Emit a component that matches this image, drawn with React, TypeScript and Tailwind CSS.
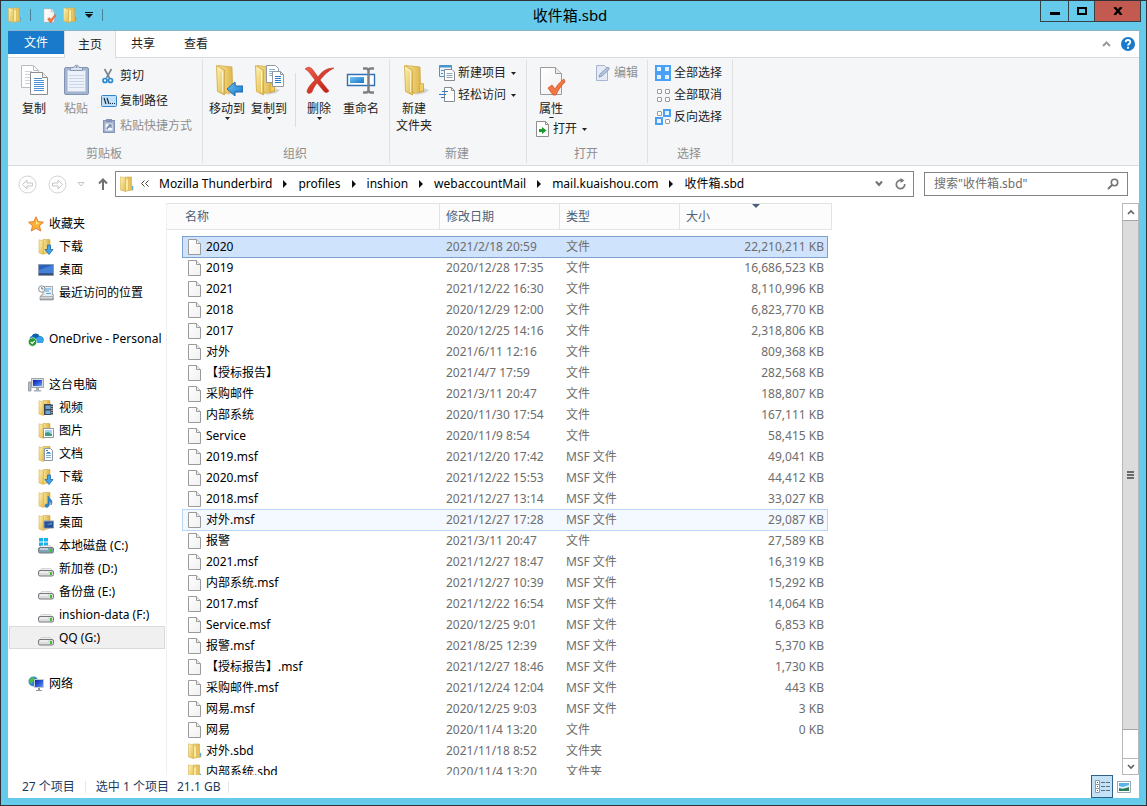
import React, { useState } from "react";

type FileRow = { name: string; date: string; type: string; size: string };

const FILES: FileRow[] = [
  { name: "2020", date: "2021/2/18 20:59", type: "文件", size: "22,210,211 KB" },
  { name: "2019", date: "2020/12/28 17:35", type: "文件", size: "16,686,523 KB" },
  { name: "2021", date: "2021/12/22 16:30", type: "文件", size: "8,110,996 KB" },
  { name: "2018", date: "2020/12/29 12:00", type: "文件", size: "6,823,770 KB" },
  { name: "2017", date: "2020/12/25 14:16", type: "文件", size: "2,318,806 KB" },
  { name: "对外", date: "2021/6/11 12:16", type: "文件", size: "809,368 KB" },
  { name: "【授标报告】", date: "2021/4/7 17:59", type: "文件", size: "282,568 KB" },
  { name: "采购邮件", date: "2021/3/11 20:47", type: "文件", size: "188,807 KB" },
  { name: "内部系统", date: "2020/11/30 17:54", type: "文件", size: "167,111 KB" },
  { name: "Service", date: "2020/11/9 8:54", type: "文件", size: "58,415 KB" },
  { name: "2019.msf", date: "2021/12/20 17:42", type: "MSF 文件", size: "49,041 KB" },
  { name: "2020.msf", date: "2021/12/22 15:53", type: "MSF 文件", size: "44,412 KB" },
  { name: "2018.msf", date: "2021/12/27 13:14", type: "MSF 文件", size: "33,027 KB" },
  { name: "对外.msf", date: "2021/12/27 17:28", type: "MSF 文件", size: "29,087 KB" },
  { name: "报警", date: "2021/3/11 20:47", type: "文件", size: "27,589 KB" },
  { name: "2021.msf", date: "2021/12/27 18:47", type: "MSF 文件", size: "16,319 KB" },
  { name: "内部系统.msf", date: "2021/12/27 10:39", type: "MSF 文件", size: "15,292 KB" },
  { name: "2017.msf", date: "2021/12/22 16:54", type: "MSF 文件", size: "14,064 KB" },
  { name: "Service.msf", date: "2020/12/25 9:01", type: "MSF 文件", size: "6,853 KB" },
  { name: "报警.msf", date: "2021/8/25 12:39", type: "MSF 文件", size: "5,370 KB" },
  { name: "【授标报告】.msf", date: "2021/12/27 18:46", type: "MSF 文件", size: "1,730 KB" },
  { name: "采购邮件.msf", date: "2021/12/24 12:04", type: "MSF 文件", size: "443 KB" },
  { name: "网易.msf", date: "2020/12/25 9:03", type: "MSF 文件", size: "3 KB" },
  { name: "网易", date: "2020/11/4 13:20", type: "文件", size: "0 KB" },
  { name: "对外.sbd", date: "2021/11/18 8:52", type: "文件夹", size: "" },
  { name: "内部系统.sbd", date: "2020/11/4 13:20", type: "文件夹", size: "" },
];

const CRUMBS = ["Mozilla Thunderbird", "profiles", "inshion", "webaccountMail", "mail.kuaishou.com", "收件箱.sbd"];

type NavItem = { label: string; icon: React.ReactNode };

const FAVORITES: NavItem[] = [
  { label: "下载", icon: <NavFolder><DownArrow /></NavFolder> },
  { label: "桌面", icon: <DesktopIcon /> },
  { label: "最近访问的位置", icon: <RecentIcon /> },
];

const COMPUTER: NavItem[] = [
  {
    label: "视频",
    icon: (
      <NavFolder>
        <path d="M6 4h9v11H6z" fill="#3c4650" />
        <path d="M7.500 5.500h5v3.500h-5zM7.500 10.500h5v3.500h-5z" fill="#6aa7d6" />
        <path d="M14 4v11" stroke="#fff" strokeDasharray="1 1" />
      </NavFolder>
    ),
  },
  {
    label: "图片",
    icon: (
      <NavFolder>
        <path d="M5.500 5.500h10v9h-10z" fill="#fff" stroke="#8c98a3" />
        <path d="M7 7h7v3H7z" fill="#9fd3f2" />
        <path d="M7 10l3-1 4 2v2H7z" fill="#3f9a86" />
      </NavFolder>
    ),
  },
  {
    label: "文档",
    icon: (
      <NavFolder>
        <path d="M6.500 2.500h6l2 2v10h-8z" fill="#fff" stroke="#8c98a3" />
        <path d="M8 7.500h5M8 9.500h5M8 11.500h5" stroke="#7fb0dc" />
        <path d="M8 4.500h2M9 6.500h3" stroke="#2f7cc8" />
      </NavFolder>
    ),
  },
  { label: "下载", icon: <NavFolder><DownArrow /></NavFolder> },
  {
    label: "音乐",
    icon: (
      <NavFolder>
        <path d="M10 4c1 3 4 3 4 6 0 1-.5 2-1 3 .3-3-1-3.500-2-4v4c0 3-4 3-4 1s1.500-2 3-2z" fill="#2b8ad8" stroke="#1a5f9e" strokeWidth=".5" />
      </NavFolder>
    ),
  },
  {
    label: "桌面",
    icon: (
      <NavFolder>
        <path d="M6 6h9.500v7H6z" fill="#1f4fa0" stroke="#8b9bb0" />
        <path d="M6.500 12.500h9M7 10l7-3v3z" fill="#4f93dc" stroke="#38506e" strokeWidth=".5" />
      </NavFolder>
    ),
  },
  { label: "本地磁盘 (C:)", icon: <DriveIcon system /> },
  { label: "新加卷 (D:)", icon: <DriveIcon /> },
  { label: "备份盘 (E:)", icon: <DriveIcon /> },
  { label: "inshion-data (F:)", icon: <DriveIcon /> },
  { label: "QQ (G:)", icon: <DriveIcon /> },
];

export default function App() {
  const [selected, setSelected] = useState(0);
  const hovered = 13;

  return (
    <div className="flex h-screen flex-col overflow-hidden border border-[#2f3338] bg-[#66cbea] px-[7px] pb-[7px] font-['Noto_Sans','Noto_Sans_CJK_SC',sans-serif] text-xs leading-4 text-[#222]">
      <Gradients />
      <TitleBar />
      <main className="flex min-h-0 flex-1 flex-col border-t border-[#8eb4c4] bg-white">
        <Tabs />
        <Ribbon />
        <AddressRow />
        <div className="mt-[6px] flex min-h-0 flex-1">
          <NavPane />
          <div className="min-w-0 flex-1 overflow-hidden">
            <FileTable selected={selected} hovered={hovered} onSelect={setSelected} />
          </div>
          <ScrollBar />
        </div>
        <StatusBar />
      </main>
    </div>
  );
}

function TitleBar() {
  return (
    <header className="-mr-[2px] flex h-[29px] shrink-0 items-start">
      <div className="flex w-[92px] items-center pt-[6px]">
        <SmallFolder />
        <span className="ml-2 h-3 w-px shrink-0 bg-[#4a8296]" />
        <button type="button" aria-label="属性" className="ml-[10px] shrink-0">
          <PropertiesIcon size={16} />
        </button>
        <button type="button" aria-label="新建文件夹" className="ml-[6px] shrink-0">
          <SmallFolder />
        </button>
        <button type="button" aria-label="自定义快速访问工具栏" className="ml-[8px] shrink-0">
          <svg width="8" height="8" viewBox="0 0 8 8">
            <path d="M0 1h8v1H0zM0 3h8L4 7z" fill="#111" />
          </svg>
        </button>
        <span className="ml-[9px] h-3 w-px shrink-0 bg-[#4a8296]" />
      </div>
      <h1 className="flex-1 pt-[4px] text-center text-[15px] leading-5 text-black">收件箱.sbd</h1>
      <div className="flex h-[21px] border-x border-b border-[#33434a]">
        <button type="button" aria-label="最小化" className="flex w-[27px] items-center justify-center pt-1">
          <span className="h-[3px] w-[10px] bg-black" />
        </button>
        <button type="button" aria-label="最大化" className="flex w-[27px] items-center justify-center border-x border-[#33434a]">
          <span className="h-2 w-[10px] border-2 border-black" />
        </button>
        <button type="button" aria-label="关闭" className="flex w-[45px] items-center justify-center bg-[#c35a50]">
          <svg width="10" height="8" viewBox="0 0 10 8">
            <path d="M1.500 0l7 8M8.500 0l-7 8" stroke="#000" strokeWidth="2.400" />
          </svg>
        </button>
      </div>
    </header>
  );
}

function Tabs() {
  return (
    <div className="flex h-[27px] shrink-0 items-stretch border-b border-[#dadbdc]">
      <button type="button" className="mb-[3px] w-14 bg-[#1979ca] text-white">
        文件
      </button>
      <button type="button" className="-mb-px w-[52px] border-x border-[#dadbdc] bg-[#f5f6f7]">
        主页
      </button>
      <button type="button" className="w-[54px]">共享</button>
      <button type="button" className="w-[52px]">查看</button>
      <div className="ml-auto flex items-center gap-[10px] pr-1">
        <button type="button" aria-label="最小化功能区">
          <svg width="9" height="6" viewBox="0 0 9 6">
            <path d="M1 5l3.500-3.500L8 5" fill="none" stroke="#9a9a9a" strokeWidth="2" />
          </svg>
        </button>
        <button type="button" aria-label="帮助">
          <svg width="14" height="14" viewBox="0 0 14 14">
            <circle cx="7" cy="7" r="7" fill="#1979ca" />
            <path d="M4.700 5.200C4.700 2.300 9.300 2.300 9.300 5 9.300 6.700 7 6.700 7 8.600M7 9.800v2" fill="none" stroke="#fff" strokeWidth="1.800" />
          </svg>
        </button>
      </div>
    </div>
  );
}

function Ribbon() {
  return (
    <div className="flex h-[108px] shrink-0 border-b border-[#dadbdc] bg-[#f5f6f7] py-[2px]">
      <RibbonGroup title="剪贴板" width="w-[195px]" inset="pl-[5px]">
        <BigButton icon={<CopyIcon />} label="复制" />
        <BigButton icon={<PasteIcon />} label="粘贴" disabled />
        <div className="ml-1 flex flex-col pt-[3px]">
          <SmallButton tall icon={<CutIcon />} label="剪切" />
          <SmallButton tall icon={<PathIcon />} label="复制路径" />
          <SmallButton tall icon={<ShortcutIcon />} label="粘贴快捷方式" disabled />
        </div>
      </RibbonGroup>
      <RibbonGroup title="组织" width="w-[187px]" inset="pl-[3px]">
        <BigButton icon={<MoveToIcon />} label="移动到" menu />
        <BigButton icon={<CopyToIcon />} label="复制到" menu />
        <span className="mt-[13px] mr-[2px] ml-[5px] h-[54px] w-px bg-[#dcdddf]" />
        <BigButton icon={<DeleteIcon />} label="删除" menu />
        <BigButton icon={<RenameIcon />} label="重命名" />
      </RibbonGroup>
      <RibbonGroup title="新建" width="w-[137px]" inset="pl-[3px]">
        <BigButton icon={<BigFolder />} label={"新建\n文件夹"} />
        <div className="ml-1 flex flex-col pt-[2px]">
          <SmallButton icon={<NewItemIcon />} label="新建项目" menu />
          <SmallButton icon={<EasyAccessIcon />} label="轻松访问" menu />
        </div>
      </RibbonGroup>
      <RibbonGroup title="打开" width="w-[121px]" inset="pl-[3px]">
        <div className="w-[65px]">
          <div className="h-[58px] overflow-hidden">
            <BigButton icon={<PropertiesIcon size={32} />} label="属性" menu />
          </div>
          <div className="pl-[6px]">
            <SmallButton icon={<OpenIcon />} label="打开" menu />
          </div>
        </div>
        <div className="pt-[2px]">
          <SmallButton icon={<EditIcon />} label="编辑" disabled />
        </div>
      </RibbonGroup>
      <RibbonGroup title="选择" width="w-[85px]" inset="pl-[7px]">
        <div className="flex flex-col pt-[2px]">
          <SmallButton icon={<SelectIcon on={[true, true, true, true]} />} label="全部选择" />
          <SmallButton icon={<SelectIcon on={[false, false, false, false]} />} label="全部取消" />
          <SmallButton icon={<SelectIcon on={[false, true, true, false]} />} label="反向选择" />
        </div>
      </RibbonGroup>
    </div>
  );
}

function RibbonGroup({ title, width, inset, children }: { title: string; width: string; inset: string; children: React.ReactNode }) {
  return (
    <section aria-label={title} className={`flex shrink-0 flex-col border-r border-[#e0e1e3] ${width}`}>
      <div className={`flex flex-1 items-start ${inset}`}>{children}</div>
      <div className="pr-[2px] pb-px text-center text-[#8e8e8e]">{title}</div>
    </section>
  );
}

function BigButton({ icon, label, menu, disabled }: { icon: React.ReactNode; label: string; menu?: boolean; disabled?: boolean }) {
  return (
    <button type="button" disabled={disabled} className={`flex w-[42px] flex-col items-center pt-1 ${disabled ? "text-[#8e8e8e]" : ""}`}>
      {icon}
      <span className="mt-1 leading-[17px] whitespace-pre">{label}</span>
      {menu ? <Caret /> : null}
    </button>
  );
}

function SmallButton({
  icon,
  label,
  menu,
  tall,
  disabled,
}: {
  icon: React.ReactNode;
  label: string;
  menu?: boolean;
  tall?: boolean;
  disabled?: boolean;
}) {
  return (
    <button
      type="button"
      disabled={disabled}
      className={`flex items-center gap-[3px] whitespace-nowrap ${tall ? "h-[25px]" : "h-[22px]"} ${disabled ? "text-[#8e8e8e]" : ""}`}
    >
      {icon}
      <span>{label}</span>
      {menu ? <span className="pl-[2px]"><Caret /></span> : null}
    </button>
  );
}

function Caret() {
  return (
    <svg width="5" height="3" viewBox="0 0 5 3" className="shrink-0">
      <path d="M0 0h5L2.500 3z" fill="#222" />
    </svg>
  );
}

function AddressRow() {
  return (
    <div className="flex shrink-0 items-center pt-[5px] pr-[11px] pl-[10px]">
      <button type="button" aria-label="后退" disabled className="mr-[11px]">
        <RoundArrow />
      </button>
      <button type="button" aria-label="前进" disabled className="rotate-180">
        <RoundArrow />
      </button>
      <button type="button" aria-label="最近浏览的位置" className="ml-[10px]">
        <svg width="8" height="5" viewBox="0 0 8 5">
          <path d="M1 .500h6L4 4z" fill="none" stroke="#c8c8c8" />
        </svg>
      </button>
      <button type="button" aria-label="上移" className="ml-[13px]">
        <svg width="10" height="12" viewBox="0 0 10 12">
          <path d="M5 12V2M1 5.500L5 1.500l4 4" fill="none" stroke="#707070" strokeWidth="2" />
        </svg>
      </button>
      <nav aria-label="地址" className="ml-[7px] flex h-[26px] min-w-0 flex-1 items-center border border-[#858585] pb-px pl-1 text-black">
        <SmallFolder />
        <svg width="8" height="7" viewBox="0 0 8 7" className="mr-[10px] ml-[7px] shrink-0" aria-hidden="true">
          <path d="M3.500 .500l-3 3 3 3M7.500 .500l-3 3 3 3" fill="none" stroke="#444" />
        </svg>
        {CRUMBS.map((crumb, i) => (
          <React.Fragment key={crumb}>
            {i > 0 ? (
              <svg width="4" height="8" viewBox="0 0 4 8" className="mx-[11px] shrink-0">
                <path d="M0 0v8l4-4z" fill="#111" />
              </svg>
            ) : null}
            <a href="#" className="whitespace-nowrap">{crumb}</a>
          </React.Fragment>
        ))}
        <button type="button" aria-label="以前的位置" className="ml-auto">
          <svg width="8" height="7" viewBox="0 0 8 7">
            <path d="M1 1.500L4 5l3-3.500" fill="none" stroke="#707070" strokeWidth="2" />
          </svg>
        </button>
        <button type="button" aria-label="刷新" className="mr-[7px] ml-3">
          <svg width="11" height="12" viewBox="0 0 11 12">
            <path d="M7 2.500A4.200 4.200 0 1 0 9.700 6" fill="none" stroke="#7a7a7a" strokeWidth="1.700" />
            <path d="M5.500 0v5l4-2.500z" fill="#7a7a7a" />
          </svg>
        </button>
      </nav>
      <label className="ml-[10px] flex h-6 w-[204px] items-center border border-[#858585] pr-2 pl-[9px]">
        <input aria-label="搜索" placeholder={'搜索"收件箱.sbd"'} className="min-w-0 flex-1 outline-none placeholder:text-[#6d6d6d]" />
        <svg width="12" height="12" viewBox="0 0 12 12">
          <circle cx="7.500" cy="4.500" r="3.200" fill="none" stroke="#757575" strokeWidth="1.600" />
          <path d="M5 7L1 11" stroke="#757575" strokeWidth="2" />
        </svg>
      </label>
    </div>
  );
}

function NavPane() {
  return (
    <nav aria-label="导航窗格" className="w-[159px] shrink-0 overflow-hidden border-r border-[#f0f0f0] pt-[9px] text-black">
      <NavSection item={{ label: "收藏夹", icon: <StarIcon /> }} items={FAVORITES} />
      <NavSection item={{ label: "OneDrive - Personal", icon: <OneDriveIcon /> }} />
      <NavSection item={{ label: "这台电脑", icon: <ComputerIcon /> }} items={COMPUTER} current="QQ (G:)" />
      <NavSection item={{ label: "网络", icon: <NetworkIcon /> }} />
    </nav>
  );
}

function NavSection({ item, items = [], current }: { item: NavItem; items?: NavItem[]; current?: string }) {
  return (
    <div className="mb-[23px]">
      <a href="#" className="flex h-[23px] items-center gap-[5px] pl-5 whitespace-nowrap">
        {item.icon}
        {item.label}
      </a>
      {items.map((it) => (
        <a
          key={it.label}
          href="#"
          className={`mr-px ml-px flex h-[23px] items-center gap-[5px] border pl-7 whitespace-nowrap ${
            it.label === current ? "border-[#dadada] bg-[#f0f0f0]" : "border-transparent"
          }`}
        >
          {it.icon}
          {it.label}
        </a>
      ))}
    </div>
  );
}

function FileTable({ selected, hovered, onSelect }: { selected: number; hovered: number; onSelect: (i: number) => void }) {
  const head = "flex items-center border-r border-[#e3e3e3] pl-[6px] text-left font-normal";
  return (
    <table className="block w-[665px]">
      <thead className="block">
        <tr className="grid h-[27px] grid-cols-[273px_120px_120px_152px] border-y border-[#e3e3e3] bg-[#fcfcfc] text-[#4c607a]">
          <th className="flex items-center border-r border-[#e3e3e3] pl-[18px] text-left font-normal">名称</th>
          <th className={head}>修改日期</th>
          <th className={head}>类型</th>
          <th aria-sort="descending" className={`relative ${head}`}>
            大小
            <svg width="8" height="4" viewBox="0 0 8 4" className="absolute top-0 left-[72px]">
              <path d="M0 0h8L4 4z" fill="#4c607a" />
            </svg>
          </th>
        </tr>
      </thead>
      <tbody className="mr-1 ml-[15px] block pt-[6px]">
        {FILES.map((f, i) => (
          <tr
            key={f.name}
            onClick={() => onSelect(i)}
            className={`-mb-px grid h-[22px] grid-cols-[257px_120px_120px_147px] items-center border text-[#6d6d6d] ${
              i === selected
                ? "border-[#7da2ce] bg-[#cfe3fc]"
                : i === hovered
                  ? "border-[#b8d6fb] bg-[#f4f9ff]"
                  : "border-transparent"
            }`}
          >
            <td className="flex items-center gap-1 pl-[5px] text-black">
              {f.type === "文件夹" ? <SmallFolder /> : <FileIcon />}
              {f.name}
            </td>
            <td className="pl-[6px]">{f.date}</td>
            <td className="pl-[6px]">{f.type}</td>
            <td className="pr-[3px] text-right">{f.size}</td>
          </tr>
        ))}
      </tbody>
    </table>
  );
}

function ScrollBar() {
  return (
    <div className="flex w-[17px] shrink-0 flex-col border border-[#b8b8b8] bg-white">
      <button type="button" aria-label="向上滚动" className="flex h-4 shrink-0 items-center justify-center">
        <svg width="8" height="6" viewBox="0 0 8 6">
          <path d="M1 5l3-3 3 3" fill="none" stroke="#606060" strokeWidth="1.600" />
        </svg>
      </button>
      <div className="flex flex-1 flex-col items-center justify-center gap-px border-y border-[#a6a6a6] bg-[#dcdcdc]">
        <span className="h-[2px] w-[7px] bg-[#6a6a6a]" />
        <span className="h-[2px] w-[7px] bg-[#6a6a6a]" />
        <span className="h-[2px] w-[7px] bg-[#6a6a6a]" />
      </div>
      <div className="h-7 shrink-0" />
      <button type="button" aria-label="向下滚动" className="flex h-4 shrink-0 items-center justify-center border-t border-[#b8b8b8]">
        <svg width="8" height="6" viewBox="0 0 8 6">
          <path d="M1 1l3 3 3-3" fill="none" stroke="#606060" strokeWidth="1.600" />
        </svg>
      </button>
    </div>
  );
}

function StatusBar() {
  return (
    <footer className="flex h-[23px] shrink-0 items-center pl-[14px] text-[#1e395b]">
      <span>27 个项目</span>
      <span className="mx-[10px] h-3 w-px bg-[#e6e6e6]" />
      <span>选中 1 个项目</span>
      <span className="ml-2">21.1 GB</span>
      <span className="ml-2 h-3 w-px bg-[#e6e6e6]" />
      <button type="button" aria-label="详细信息" className="ml-auto flex h-[23px] w-[22px] items-center justify-center border border-[#2c628b] bg-[#c3e2f6]">
        <svg width="15" height="14" viewBox="0 0 15 14">
          <path d="M.500.500h4v4h-4zM.500 4.500h4v4h-4zM.500 8.500h4v4h-4z" fill="#fff" stroke="#8e9aa8" />
          <path d="M2 2h1v1H2z" fill="#2c8a3c" />
          <path d="M2 6h1v1H2z" fill="#d22" />
          <path d="M2 10h1v1H2z" fill="#27c" />
          <path d="M6 2.500h4M11 2.500h4M6 6.500h4M11 6.500h4M6 10.500h4M11 10.500h4" stroke="#5d6d88" />
        </svg>
      </button>
      <button type="button" aria-label="大缩略图" className="mr-2 ml-1">
        <svg width="14" height="12" viewBox="0 0 14 12">
          <path d="M.500.500h13v11H.500z" fill="#fff" stroke="#9aa8b8" />
          <path d="M2 2h10v8H2z" fill="#58b3ea" />
          <path d="M2 5l4 1 6-2v3L2 8z" fill="#e4f4fb" />
          <path d="M2 10V7l4 1 6-2v4z" fill="#2f7d55" />
        </svg>
      </button>
    </footer>
  );
}

/* ---------- icons ---------- */

function Gradients() {
  return (
    <svg width="0" height="0" className="absolute" aria-hidden="true">
      <defs>
        <linearGradient id="gFolder" x1="0" x2="1" y1="0" y2="1">
          <stop offset="0" stopColor="#fdf3b5" />
          <stop offset="1" stopColor="#e3ba4c" />
        </linearGradient>
        <linearGradient id="gFolderBack" x1="0" x2="1" y1="0" y2="0">
          <stop offset="0" stopColor="#f8e59a" />
          <stop offset="1" stopColor="#d9ac3b" />
        </linearGradient>
        <linearGradient id="gPaper" x1="0" x2="1" y1="0" y2="1">
          <stop offset="0" stopColor="#fff" />
          <stop offset="1" stopColor="#f0f0f0" />
        </linearGradient>
        <linearGradient id="gBlue" x1="0" x2="1" y1="0" y2="1">
          <stop offset="0" stopColor="#6cc6f8" />
          <stop offset="1" stopColor="#1673c4" />
        </linearGradient>
        <linearGradient id="gScreen" x1="0" x2="1" y1="0" y2="1">
          <stop offset="0" stopColor="#0c1f9c" />
          <stop offset=".5" stopColor="#2a55d8" />
          <stop offset="1" stopColor="#6fa4f0" />
        </linearGradient>
        <linearGradient id="gRed" x1="0" x2="1" y1="0" y2="1">
          <stop offset="0" stopColor="#f0604c" />
          <stop offset="1" stopColor="#b8160e" />
        </linearGradient>
        <linearGradient id="gGrey" x1="0" x2="0" y1="0" y2="1">
          <stop offset="0" stopColor="#f2f2f2" />
          <stop offset="1" stopColor="#9a9a9a" />
        </linearGradient>
      </defs>
    </svg>
  );
}

function SmallFolder() {
  return (
    <svg width="14" height="16" viewBox="0 0 14 16" className="shrink-0">
      <path d="M5 1h6.500v8.500l1.500 1V14l-7 1z" fill="url(#gFolderBack)" stroke="#d0a94a" strokeWidth=".6" />
      <path d="M.500.800L5.500 2v13.500L.500 14z" fill="url(#gFolder)" stroke="#d6b455" strokeWidth=".6" />
      <path d="M5.500 3.500L8.500 2v12l-3 1.500z" fill="#fbe99f" stroke="#cfa640" strokeWidth=".5" />
      <path d="M12.500 10v3.500" stroke="#58a9e0" />
    </svg>
  );
}

/** Upright folder outline shared by the large ribbon icons. */
function FolderShape() {
  return (
    <g>
      <path d="M24 24l6 2-4 3-10 2z" fill="#b9babb" opacity=".6" />
      <path d="M7 1.500l14 1.500.500 17 3 .500v7l-10 2z" fill="url(#gFolderBack)" stroke="#cfa23a" strokeWidth=".7" />
      <path d="M20.500 20l4-.500v7.500l-4 1z" fill="#f1ce62" stroke="#cf9f31" strokeWidth=".6" />
      <path d="M5.500 1.500l8 4.500V31l-7-3.500z" fill="url(#gFolder)" stroke="#cda640" strokeWidth=".8" />
      <path d="M7 4.500l4.500 3V28" fill="none" stroke="#fffbe0" strokeWidth=".8" />
    </g>
  );
}

function BigFolder() {
  return (
    <svg width="32" height="32" viewBox="0 0 32 32">
      <g transform="translate(1 0)"><FolderShape /></g>
    </svg>
  );
}

function MoveToIcon() {
  return (
    <svg width="32" height="32" viewBox="0 0 32 32">
      <FolderShape />
      <path d="M16 25l8-7v4h8v6h-8v4z" fill="url(#gBlue)" stroke="#1763a8" strokeWidth=".9" />
    </svg>
  );
}

function CopyToIcon() {
  return (
    <svg width="32" height="32" viewBox="0 0 32 32">
      <g transform="translate(-3 0)"><FolderShape /></g>
      <path d="M13.500 1.500h9l3 3v14h-12z" fill="#fff" stroke="#9299a2" />
      <path d="M16 5.500h6M16 7.500h7M16 9.500h7M16 11.500h4" stroke="#8db4dc" />
      <path d="M19.500 7.500h8l3 3v12h-11z" fill="#fff" stroke="#9299a2" />
      <path d="M27.500 7.500v3h3" fill="none" stroke="#9299a2" />
      <path d="M22 12.500h6M22 14.500h6M22 16.500h6M22 18.500h6" stroke="#2f7cc8" />
    </svg>
  );
}

function CopyIcon() {
  return (
    <svg width="32" height="32" viewBox="0 0 32 32">
      <path d="M3.500 1.500h12l5 5v17h-17z" fill="#fff" stroke="#bdbdbd" />
      <path d="M15.500 1.500v5h5" fill="none" stroke="#bdbdbd" />
      <path d="M7 7.500h7M7 10.500h6M7 13.500h5M7 16.500h5M7 19.500h5" stroke="#cfd3d8" />
      <path d="M12.500 8.500h12l5 5v17h-17z" fill="#fff" stroke="#8e8e8e" />
      <path d="M24.500 8.500v5h5" fill="#eee" stroke="#8e8e8e" />
      <path d="M16 14.500h8M16 16.500h10M16 18.500h10M16 20.500h10M16 22.500h10M16 24.500h10M16 26.500h10" stroke="#4b8fd6" />
    </svg>
  );
}

function PasteIcon() {
  return (
    <svg width="32" height="32" viewBox="0 0 32 32">
      <rect x="4.500" y="3.500" width="24" height="27" rx="1.500" fill="#a3b4d0" stroke="#8594b4" />
      <path d="M7.500 6.500h18v21h-18z" fill="#edf2fa" stroke="#c3cde0" />
      <path d="M9 11.500h15M9 14.500h15M9 17.500h15M9 20.500h15M9 23.500h15" stroke="#cad6ea" />
      <path d="M10.500 6.500v-3h3.500c0-3 5-3 5 0h3.500v3z" fill="#dde3ec" stroke="#8594b4" />
      <circle cx="16.500" cy="3" r="1" fill="#8594b4" />
    </svg>
  );
}

function DeleteIcon() {
  return (
    <svg width="32" height="32" viewBox="0 0 32 32">
      <path
        d="M2 5c3-3 6-2 8 1l5 7c4-6 9-9 16-9-6 3-10 7-14 12 3 4 6 7 9 11-3 3-5 1-7-2l-5-6c-3 4-4 6-5 9-2 2-5 2-5-1 1-4 4-7 8-11C8 11 6 7 2 5z"
        fill="url(#gRed)"
        stroke="#c0251a"
        strokeWidth=".5"
      />
    </svg>
  );
}

function RenameIcon() {
  return (
    <svg width="32" height="32" viewBox="0 0 32 32">
      <path d="M2.500 10.500h27v11h-27z" fill="#fff" stroke="#2f6fb2" strokeWidth="1.400" />
      <path d="M5 13h14v6H5z" fill="url(#gBlue)" />
      <path d="M18 4.500h3c2 0 2.500 1 2.500 2.500C23.500 5.500 24 4.500 26 4.500h3M23.500 6v20M18 28.500h3c2 0 2.500-1 2.500-2.500 0 1.500.5 2.500 2.500 2.500h3" fill="none" stroke="#7c8085" strokeWidth="2.500" />
    </svg>
  );
}

function PropertiesIcon({ size }: { size: number }) {
  return (
    <svg width={size} height={size} viewBox="0 0 32 32">
      <path d="M5.500 3.500h15l6 6v21h-21z" fill="url(#gPaper)" stroke="#9b9b9b" />
      <path d="M20.500 3.500v6h6" fill="#e8e8e8" stroke="#9b9b9b" />
      <path d="M13 24l4-3 3 4c3-5 6-8 9-10l1 3c-4 4-7 8-9 13h-3z" fill="#ee7743" stroke="#d9552a" strokeWidth=".8" />
    </svg>
  );
}

function CutIcon() {
  return (
    <svg width="16" height="16" viewBox="0 0 16 16" className="shrink-0">
      <path d="M3.500 1l5 9M10.500 1l-5 9" stroke="#7b838c" strokeWidth="1.600" />
      <circle cx="4" cy="12.500" r="2" fill="none" stroke="#2a8ad0" strokeWidth="1.700" />
      <circle cx="9.500" cy="12.500" r="2" fill="none" stroke="#2a8ad0" strokeWidth="1.700" />
    </svg>
  );
}

function PathIcon() {
  return (
    <svg width="16" height="16" viewBox="0 0 16 16" className="shrink-0">
      <rect x=".5" y="2.500" width="15" height="11" rx="1" fill="#bfe1fb" stroke="#3582c8" />
      <path d="M3 5l2 6M6 5l2 6" stroke="#1b2a3a" strokeWidth="1.200" />
      <path d="M9 10h1v1H9zM11 10h1v1h-1zM13 10h1v1h-1z" fill="#1b2a3a" />
    </svg>
  );
}

function ShortcutIcon() {
  return (
    <svg width="16" height="16" viewBox="0 0 16 16" className="shrink-0">
      <rect x="2.500" y="2.500" width="11" height="12" fill="#9fb0cc" stroke="#8594b4" />
      <path d="M5 1h6v3H5z" fill="#8594b4" />
      <path d="M4.500 5.500h7v7h-7z" fill="#f3f6fb" />
      <path d="M6 11.500c0-2 1-3 3-3M7.500 7H10v3" fill="none" stroke="#6d80a8" strokeWidth="1.300" />
    </svg>
  );
}

function NewItemIcon() {
  return (
    <svg width="16" height="16" viewBox="0 0 16 16" className="shrink-0">
      <path d="M.500.500h12v11H.500z" fill="#e9f4fc" stroke="#4a94cc" />
      <path d="M.500.500h12v2H.500z" fill="#4a94cc" />
      <path d="M2 5.500h3M2 8.500h2" stroke="#4a94cc" />
      <path d="M5.500 4.500h7.500l2.500 2.500v8.500h-10z" fill="#fff" stroke="#858c94" />
      <path d="M7.500 8.500h6M7.500 10.500h6M7.500 12.500h6" stroke="#8fa4b8" />
    </svg>
  );
}

function EasyAccessIcon() {
  return (
    <svg width="16" height="16" viewBox="0 0 16 16" className="shrink-0">
      <path d="M5.500.500h7l3 3v11h-10z" fill="#fff" stroke="#858c94" />
      <path d="M12.500.500v3h3" fill="none" stroke="#858c94" />
      <path d="M3 4.500h6M0 7.500h7M2 10.500h4" stroke="#2f7cc8" />
    </svg>
  );
}

function OpenIcon() {
  return (
    <svg width="14" height="16" viewBox="0 0 14 16" className="shrink-0">
      <path d="M.500.500h9l3 3v12H.500z" fill="#fff" stroke="#8e8e8e" />
      <path d="M9.500.500v3h3" fill="none" stroke="#8e8e8e" />
      <path d="M3 8h3V6l4.500 3.500L6 13v-2H3z" fill="#1d9a2c" />
    </svg>
  );
}

function EditIcon() {
  return (
    <svg width="16" height="16" viewBox="0 0 16 16" className="shrink-0">
      <path d="M1.500.500h8l3 3v12h-11z" fill="#e4ebf6" stroke="#a7b5cf" />
      <path d="M4 12l1-3 8-7 1.500 2-7.500 7z" fill="#b4c3de" stroke="#8496ba" strokeWidth=".9" />
    </svg>
  );
}

function SelectIcon({ on }: { on: boolean[] }) {
  return (
    <svg width="16" height="16" viewBox="0 0 16 16" className="shrink-0">
      {on.map((active, i) => {
        const x = (i % 2) * 8;
        const y = Math.floor(i / 2) * 8;
        return active ? (
          <g key={i}>
            <rect x={x} y={y} width="8" height="8" fill="#4aa0f5" />
            <rect x={x + 2} y={y + 2} width="4" height="4" fill="#e3f2ff" />
          </g>
        ) : (
          <rect key={i} x={x + 2.5} y={y + 2.5} width="4" height="4" rx=".5" fill="#fff" stroke="#9a9a9a" />
        );
      })}
    </svg>
  );
}

function RoundArrow() {
  return (
    <svg width="19" height="19" viewBox="0 0 19 19">
      <circle cx="9.500" cy="9.500" r="8.500" fill="none" stroke="#d2d2d2" />
      <path d="M4.500 9.500l4.500-4.500v3h5.500v3H9v3z" fill="#fff" stroke="#c6c6c6" strokeLinejoin="round" />
    </svg>
  );
}

function FileIcon() {
  return (
    <svg width="14" height="16" viewBox="0 0 14 16" className="shrink-0">
      <path d="M.500.500h8l4 4v11H.500z" fill="url(#gPaper)" stroke="#9a9a9a" />
      <path d="M8.500.500v4h4" fill="#eee" stroke="#9a9a9a" />
    </svg>
  );
}

function NavFolder({ children }: { children: React.ReactNode }) {
  return (
    <svg width="16" height="16" viewBox="0 0 16 16" className="shrink-0">
      <path d="M5 .500h7V13l-6 2z" fill="url(#gFolderBack)" stroke="#d0a94a" strokeWidth=".6" />
      <path d="M1 .800L5.500 2v13.500L1 14z" fill="url(#gFolder)" stroke="#d6b455" strokeWidth=".6" />
      {children}
    </svg>
  );
}

function DownArrow() {
  return <path d="M9.500 6h3v4.500H15l-4 5-4-5h2.500z" fill="#3fa3ea" stroke="#1c6cb4" strokeWidth=".8" />;
}

function DesktopIcon() {
  return (
    <svg width="16" height="16" viewBox="0 0 16 16" className="shrink-0">
      <path d="M.500 2.500h15v11H.500z" fill="#2a62c0" stroke="#8d9bb0" />
      <path d="M1 11V8l14-5v8z" fill="#5b96e4" opacity=".6" />
      <path d="M1 11.500h14V13H1z" fill="#3b4f6c" />
    </svg>
  );
}

function RecentIcon() {
  return (
    <svg width="16" height="16" viewBox="0 0 16 16" className="shrink-0">
      <path d="M5 1.500h9.500V10H16v4H3v-4h2z" fill="#e8edf2" stroke="#8b949d" strokeWidth=".8" />
      <path d="M7 4h6M7 6h4M8 8.500h5" stroke="#56a7dc" />
      <path d="M2 11.500h13V15H2z" fill="url(#gGrey)" stroke="#7e868e" strokeWidth=".6" />
      <circle cx="3.800" cy="4" r="3.200" fill="#f6f8fa" stroke="#8b949d" />
      <path d="M3.800 2v2h1.700" fill="none" stroke="#555" strokeWidth=".8" />
    </svg>
  );
}

function StarIcon() {
  return (
    <svg width="16" height="16" viewBox="0 0 16 16" className="shrink-0">
      <path d="M8 .800l2.200 4.800 5.300.600-4 3.500 1.200 5.300L8 12.400 3.300 15l1.200-5.300-4-3.500 5.300-.600z" fill="#fbb03a" stroke="#e0762a" strokeWidth=".9" />
      <path d="M8 3l1.300 3.400 2.700.400-4 2.200z" fill="#ffe37a" />
    </svg>
  );
}

function OneDriveIcon() {
  return (
    <svg width="16" height="16" viewBox="0 0 16 16" className="shrink-0">
      <path d="M3 11C.500 8 2 5 4 5c1-3 6-3.500 7.500 0 4 0 5.500 4 3 7z" fill="#1b78cf" />
      <path d="M7 8l4.500-2.500c4 .500 5 4.500 3 6.500H6z" fill="#39a3ea" />
      <path d="M4 5c1-3 5.500-3.300 7 0L8 7z" fill="#1160a8" />
      <circle cx="4.500" cy="11" r="4.200" fill="#27982c" stroke="#fff" strokeWidth=".6" />
      <path d="M2.700 11l1.500 1.500 2.400-2.600" fill="none" stroke="#fff" strokeWidth="1.200" />
    </svg>
  );
}

function ComputerIcon() {
  return (
    <svg width="16" height="16" viewBox="0 0 16 16" className="shrink-0">
      <path d="M.500 5h2.500v9H.500z" fill="#b9bfc5" stroke="#7d858d" strokeWidth=".7" />
      <path d="M3.500 1.500h12v9h-12z" fill="#d7dce1" stroke="#9ba3ab" />
      <path d="M5 3h9v6H5z" fill="url(#gScreen)" />
      <path d="M8 11h3v2h2v1.500H6V13h2z" fill="#a6adb4" />
    </svg>
  );
}

function DriveIcon({ system }: { system?: boolean }) {
  return (
    <svg width="16" height="16" viewBox="0 0 16 16" className="shrink-0">
      {system ? <path d="M1 0h4v3.500H1zM6 0h4v3.500H6zM1 4.500h4V8H1zM6 4.500h4V8H6z" fill="#14b1ea" /> : null}
      <path d="M3.500 7.500h9l3 3.500H.500z" fill="#efefef" stroke="#bdbdbd" strokeWidth=".6" />
      <rect x=".5" y="9.500" width="15" height="5.500" rx="1.500" fill={system ? "#7fa3b4" : "#dcdcdc"} stroke="#75797d" />
      <path d="M2 11h8" stroke="#fff" />
      <path d="M12 11h2v3h-2z" fill="#35c52c" />
    </svg>
  );
}

function NetworkIcon() {
  return (
    <svg width="16" height="16" viewBox="0 0 16 16" className="shrink-0">
      <circle cx="5.500" cy="5.500" r="5" fill="#2f86d8" />
      <path d="M2 3c2-2.500 4-2 4.500-1S5 4 4.500 6 3 8 2 7 1 4.500 2 3zM8 2l2 2-1 2z" fill="#4cc04a" />
      <path d="M6.500 3.500h9v8h-9z" fill="url(#gScreen)" stroke="#c3cad2" />
      <path d="M10 12h2v2h2v1H8v-1h2z" fill="#8f979f" />
    </svg>
  );
}
